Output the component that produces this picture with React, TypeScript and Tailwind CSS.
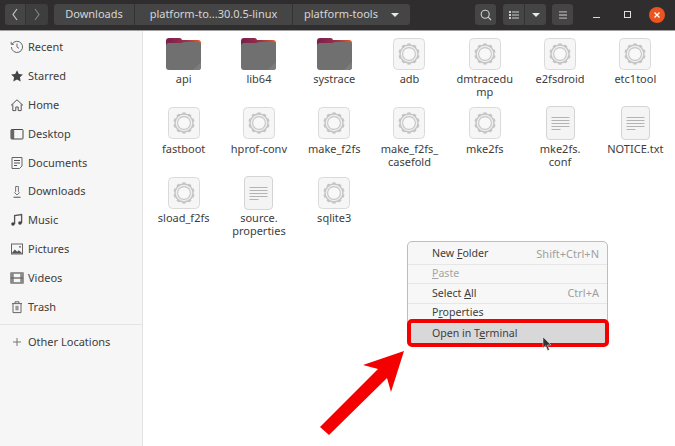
import React from "react";

const font = { fontFamily: '"Noto Sans", "Open Sans", sans-serif' };

function Ic({ children }: { children: React.ReactNode }) {
  return (
    <svg width="14" height="14" viewBox="0 0 14 14" fill="none" stroke="#4a4a4a" strokeWidth="1" className="shrink-0">
      {children}
    </svg>
  );
}

const sideIcons: Record<string, React.ReactNode> = {
  Recent: (
    <Ic>
      <path d="M2.2 4A5.6 5.6 0 1 1 1.400 7" stroke="#666" />
      <path d="M1.200 1.800v2.600h2.600" stroke="#666" />
      <path d="M7 3.600V7l2 1.400" stroke="#666" />
    </Ic>
  ),
  Starred: (
    <Ic>
      <path d="M7 1.200l1.800 3.800 4.100.5-3 2.800.8 4.100L7 10.400l-3.700 2 .8-4.100-3-2.800 4.100-.5z" fill="#444" stroke="none" />
    </Ic>
  ),
  Home: (
    <Ic>
      <path d="M1 7.400L7 1.800l6 5.600" stroke="#555" />
      <path d="M2.800 6.400v6.200h3V9h2.400v3.600h3V6.400" stroke="#555" />
    </Ic>
  ),
  Desktop: (
    <Ic>
      <rect x="1" y="2.500" width="12" height="9.500" rx="0.8" stroke="#444" />
      <rect x="1" y="2.500" width="3.200" height="9.500" fill="#666" stroke="none" />
    </Ic>
  ),
  Documents: (
    <Ic>
      <path d="M2 1.500h10v8.500l-2.500 2.500H2z" stroke="#666" />
      <path d="M4 4.500h6M4 7h6M4 9.500h3" stroke="#555" />
    </Ic>
  ),
  Downloads: (
    <Ic>
      <path d="M5.600 1.500h2.800v5.200l1 .9L7 10 4.600 7.600l1-.9z" stroke="#777" />
      <path d="M3.500 12.300h7" stroke="#777" strokeWidth="1.300" />
    </Ic>
  ),
  Music: (
    <Ic>
      <path d="M4.600 11V2.600l7-1v8.400" stroke="#555" strokeWidth="1.300" />
      <circle cx="3" cy="11" r="1.800" fill="#444" stroke="none" />
      <circle cx="10" cy="10" r="1.800" fill="#444" stroke="none" />
    </Ic>
  ),
  Pictures: (
    <Ic>
      <rect x="1.500" y="2" width="11" height="10" stroke="#666" />
      <path d="M1.500 11.500l3.300-4 2.400 2.200 1.600-1.400 3.700 3.200z" fill="#555" stroke="none" />
      <circle cx="10" cy="4.800" r="0.900" fill="#555" stroke="none" />
    </Ic>
  ),
  Videos: (
    <Ic>
      <rect x="1" y="2" width="12" height="10" strokeWidth="1.200" stroke="#555" />
      <path d="M3.800 7h6.400" strokeWidth="1.200" stroke="#555" />
      <path d="M1 2h2.800v10H1zM10.200 2H13v10h-2.800z" fill="#8a8a8a" stroke="none" />
      <path d="M1 7h2.800M10.200 7H13" stroke="#555" strokeWidth="1.200" />
    </Ic>
  ),
  Trash: (
    <Ic>
      <path d="M2 3.600h10M5 3.400V1.800h4v1.600" stroke="#666" />
      <path d="M3 3.600v9h8v-9" stroke="#666" />
      <path d="M5.400 5.800v4.600h3.200V5.800z" fill="#999" stroke="none" />
    </Ic>
  ),
};

function GearIcon() {
  const teeth = Array.from({ length: 10 }, (_, i) => i * 36);
  return (
    <svg width="32" height="32" viewBox="0 0 32 32">
      <rect x="0.500" y="0.500" width="31" height="31" rx="4" fill="#f6f6f6" stroke="#dadada" />
      {teeth.map((a) => (
        <rect key={a} x="14.400" y="5.400" width="3.200" height="2.400" fill="#c4c4c4" transform={`rotate(${a} 16 16)`} />
      ))}
      <circle cx="16" cy="16" r="9" fill="#f0f0f0" stroke="#c4c4c4" strokeWidth="1.400" />
      <circle cx="16" cy="16" r="6.400" fill="#f8f8f8" stroke="#c6c6c6" strokeWidth="1.100" />
    </svg>
  );
}

function DocIcon() {
  return (
    <svg width="29" height="34" viewBox="0 0 29 34">
      <rect x="0.500" y="0.500" width="28" height="33" rx="3.500" fill="#f4f4f4" stroke="#d4d4d4" />
      <path d="M5.500 11.500h18M5.500 14.500h18M5.500 17.500h18M5.500 20.500h18" stroke="#b4b4b4" />
      <path d="M5.500 23.500h9" stroke="#b4b4b4" />
    </svg>
  );
}

function FolderIcon() {
  return (
    <svg width="35" height="32" viewBox="0 0 35 32">
      <defs>
        <linearGradient id="tab" x1="0" y1="0" x2="1" y2="0">
          <stop offset="0" stopColor="#7c1d4e" />
          <stop offset="0.55" stopColor="#96314a" />
          <stop offset="1" stopColor="#ea5a25" />
        </linearGradient>
      </defs>
      <path d="M3 0h10.500c1.400 0 2 .8 2.600 2H32a3 3 0 0 1 3 3v8H0V3a3 3 0 0 1 3-3z" fill="url(#tab)" />
      <path d="M3 5h12c1.400 0 2-1 3-1h14a3 3 0 0 1 3 3v22a3 3 0 0 1-3 3H3a3 3 0 0 1-3-3V8a3 3 0 0 1 3-3z" fill="#707070" />
      <path d="M35 24v5a3 3 0 0 1-3 3h-5z" fill="#7c7c7c" />
    </svg>
  );
}

type Kind = "folder" | "gear" | "doc";
const files: [string, Kind][] = [
  ["api", "folder"],
  ["lib64", "folder"],
  ["systrace", "folder"],
  ["adb", "gear"],
  ["dmtracedu\nmp", "gear"],
  ["e2fsdroid", "gear"],
  ["etc1tool", "gear"],
  ["fastboot", "gear"],
  ["hprof-conv", "gear"],
  ["make_f2fs", "gear"],
  ["make_f2fs_\ncasefold", "gear"],
  ["mke2fs", "gear"],
  ["mke2fs.\nconf", "doc"],
  ["NOTICE.txt", "doc"],
  ["sload_f2fs", "gear"],
  ["source.\nproperties", "doc"],
  ["sqlite3", "gear"],
];

function HeaderButton({ children, className = "" }: { children: React.ReactNode; className?: string }) {
  return <div className={`flex h-[21px] items-center justify-center bg-[#454545] ${className}`}>{children}</div>;
}

function MenuRow({
  children,
  hint,
  disabled,
  last,
}: {
  children: React.ReactNode;
  hint?: string;
  disabled?: boolean;
  last?: boolean;
}) {
  return (
    <div
      className={`flex h-[19.700px] items-center justify-between pl-[24px] pr-[8px] text-[10.600px] ${
        last ? "bg-[#d8d8d8]" : "border-b border-[#e6e6e6]"
      } ${disabled ? "text-[#a5a5a5]" : "text-[#3d3d3d]"}`}
    >
      <span>{children}</span>
      {hint && <span className="text-[11px] text-[#a0a0a0]">{hint}</span>}
    </div>
  );
}

export default function App() {
  return (
    <div className="relative flex h-[446px] w-[675px] flex-col overflow-hidden bg-white" style={font}>
      <header className="flex h-[31px] shrink-0 items-center border-b border-[#a0a0a0] bg-[#2f2d2d] pb-[1px] pl-[5px] text-[11px] text-[#d6d6d6]">
        <div className="flex h-[21px] w-[43px] overflow-hidden rounded-[3px]">
          <HeaderButton className="w-[21px] border-r border-[#333]">
            <svg width="8" height="13" viewBox="0 0 8 13" fill="none" stroke="#c4c4c4" strokeWidth="1.200">
              <path d="M6 1L2 6.500 6 12" />
            </svg>
          </HeaderButton>
          <HeaderButton className="w-[22px] !bg-[#3e3e3e]">
            <svg width="8" height="13" viewBox="0 0 8 13" fill="none" stroke="#808080" strokeWidth="1.200">
              <path d="M2 1l4 5.500L2 12" />
            </svg>
          </HeaderButton>
        </div>
        <div className="ml-[6px] flex h-[21px] w-[356px] overflow-hidden rounded-[3px]">
          <HeaderButton className="w-[81px] border-r border-[#333]">Downloads</HeaderButton>
          <HeaderButton className="w-[158px] border-r border-[#333]">platform-to...30.0.5-linux</HeaderButton>
          <HeaderButton className="flex-1 gap-[13px]">
            <span>platform-tools</span>
            <svg width="8" height="4" viewBox="0 0 8 4">
              <path d="M0 0h8L4 4z" fill="#e8e8e8" />
            </svg>
          </HeaderButton>
        </div>
        <HeaderButton className="ml-[65px] w-[21px] rounded-[3px]">
          <svg width="12" height="12" viewBox="0 0 12 12" fill="none" stroke="#d0d0d0" strokeWidth="1.100">
            <circle cx="5.200" cy="5.200" r="4" />
            <path d="M8.200 8.200L11 11" />
          </svg>
        </HeaderButton>
        <div className="ml-[7px] flex h-[21px] w-[43px] overflow-hidden rounded-[3px]">
          <HeaderButton className="w-[22px] border-r border-[#333]">
            <svg width="10" height="10" viewBox="0 0 10 10" fill="#cfcfcf">
              <path d="M0 1h2v2H0zM3 1.400h7v1.200H3zM0 4h2v2H0zM3 4.400h7v1.200H3zM0 7h2v2H0zM3 7.400h7v1.200H3z" />
            </svg>
          </HeaderButton>
          <HeaderButton className="w-[21px]">
            <svg width="8" height="4" viewBox="0 0 8 4">
              <path d="M0 0h8L4 4z" fill="#e8e8e8" />
            </svg>
          </HeaderButton>
        </div>
        <HeaderButton className="ml-[6px] w-[21px] rounded-[3px]">
          <svg width="10" height="10" viewBox="0 0 10 10" fill="#a8a8a8">
            <path d="M1 1.200h8v1.400H1zM1 4.300h8v1.400H1zM1 7.400h8v1.400H1z" />
          </svg>
        </HeaderButton>
        <div className="ml-[20px] flex items-center">
          <div className="h-[1px] w-[7px] translate-y-[3px] bg-[#d8d8d8]" />
          <div className="ml-[24px] h-[7px] w-[7px] border border-[#e0e0e0]" />
          <div className="ml-[18px] flex h-[16px] w-[16px] items-center justify-center rounded-full bg-[#e95420]">
            <svg width="8" height="8" viewBox="0 0 8 8" stroke="#fff" strokeWidth="1.300">
              <path d="M1.500 1.500l5 5M6.500 1.500l-5 5" />
            </svg>
          </div>
        </div>
      </header>

      <div className="flex min-h-0 flex-1">
        <aside className="flex w-[143px] shrink-0 flex-col border-r border-[#e2e2e2] bg-[#f6f6f6] pt-[2px] text-[11px] text-[#3d3d3d]">
          {Object.keys(sideIcons).map((name) => (
            <div key={name} className="flex h-[28.850px] items-center gap-[4px] pl-[10px]">
              <span className="flex w-[14px] justify-center">{sideIcons[name]}</span>
              <span>{name}</span>
            </div>
          ))}
          <div className="mt-[3px] border-t border-[#e4e4e4] pt-[3px]">
            <div className="flex h-[28px] items-center gap-[4px] pl-[10px]">
              <Ic>
                <path d="M7 3v8M3 7h8" stroke="#777" />
              </Ic>
              <span>Other Locations</span>
            </div>
          </div>
        </aside>

        <main className="grid flex-1 auto-rows-[69.700px] grid-cols-7 content-start pl-[3px] pr-[2px] pt-[6px] text-[11px] leading-[13px] text-[#3d3d3d]">
          {files.map(([name, kind]) => (
            <div key={name} className="flex flex-col items-center">
              <div className="flex h-[33px] items-center justify-center">
                {kind === "folder" ? <FolderIcon /> : kind === "gear" ? <GearIcon /> : <DocIcon />}
              </div>
              <span className="mt-[2px] w-[72px] whitespace-pre-line text-center">{name}</span>
            </div>
          ))}
        </main>
      </div>

      <div className="absolute left-[407px] top-[241px] w-[201px] rounded-[5px] border border-[#bdbdbd] bg-[#f7f7f7] pb-[1px] pt-[3px]">
        <MenuRow hint="Shift+Ctrl+N">
          New <u>F</u>older
        </MenuRow>
        <MenuRow disabled>
          <u>P</u>aste
        </MenuRow>
        <MenuRow hint="Ctrl+A">
          Select <u>A</u>ll
        </MenuRow>
        <MenuRow>
          P<u>r</u>operties
        </MenuRow>
        <MenuRow last>
          Open in T<u>e</u>rminal
        </MenuRow>
      </div>
      <div className="absolute left-[407px] top-[319px] h-[28px] w-[202px] rounded-[5px] border-4 border-[#f50000]" />

      <svg className="absolute left-[540px] top-[335px]" width="14" height="20" viewBox="0 0 14 20">
        <path d="M3 2v11l2.600-2.400 2 5 1.800-.8-2-4.800H11z" fill="#333" stroke="#eee" strokeWidth="0.500" />
      </svg>

      <svg className="absolute left-[310px] top-[340px]" width="105" height="100" viewBox="0 0 105 100">
        <polygon points="94,11 81,52 77,38 19,95 10,87 68,29 53,25" fill="#f50000" />
      </svg>
    </div>
  );
}
